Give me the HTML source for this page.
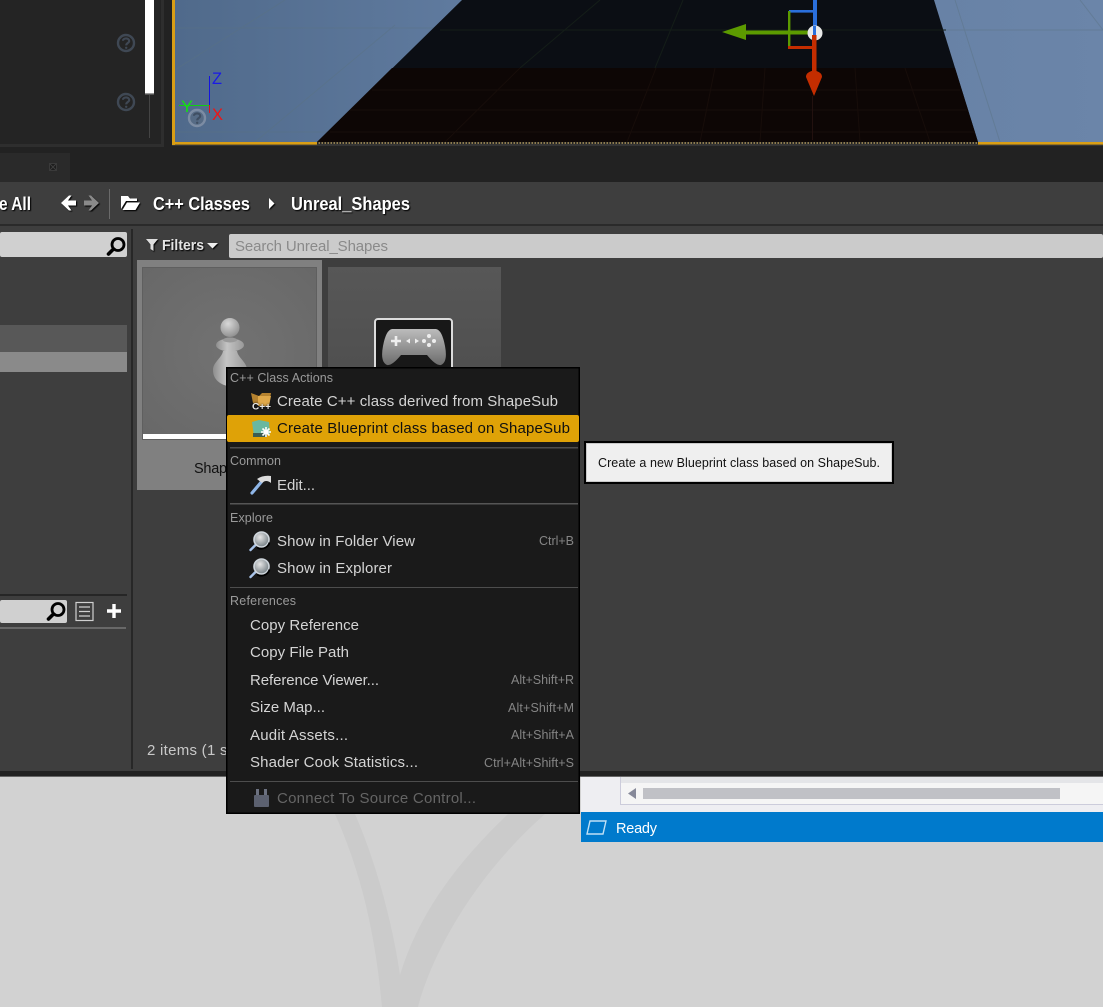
<!DOCTYPE html>
<html>
<head>
<meta charset="utf-8">
<style>
html,body{margin:0;padding:0;background:#d2d2d2;width:1103px;height:1007px;overflow:hidden}
svg{display:block}
text{font-family:"Liberation Sans",sans-serif;white-space:pre}
.m{font-size:15px;fill:#d4d4d4}
.h{font-size:12.5px;fill:#9a9a9a}
.k{font-size:12.5px;fill:#858585}
.b{font-weight:bold;font-size:18px;fill:#fff}
</style>
</head>
<body>
<svg width="1103" height="1007" viewBox="0 0 1103 1007" xmlns="http://www.w3.org/2000/svg">
<defs>
<linearGradient id="sky" x1="0" y1="0" x2="1" y2="0"><stop offset="0" stop-color="#506a8b"/><stop offset="0.3" stop-color="#5f7a9e"/><stop offset="1" stop-color="#6b85a9"/></linearGradient>
<radialGradient id="th1" cx="0.5" cy="0.5" r="0.7"><stop offset="0" stop-color="#727272"/><stop offset="1" stop-color="#686868"/></radialGradient>
<linearGradient id="th2" x1="0" y1="0" x2="0" y2="1"><stop offset="0" stop-color="#575757"/><stop offset="1" stop-color="#4b4b4b"/></linearGradient>
<radialGradient id="ball" cx="0.4" cy="0.3" r="0.8"><stop offset="0" stop-color="#d8d8d8"/><stop offset="1" stop-color="#888"/></radialGradient>
<linearGradient id="body" x1="0" y1="0" x2="1" y2="0"><stop offset="0" stop-color="#8e8e8e"/><stop offset="0.4" stop-color="#c4c4c4"/><stop offset="1" stop-color="#999"/></linearGradient>
<linearGradient id="pad" x1="0" y1="0" x2="0" y2="1"><stop offset="0" stop-color="#bcbcbc"/><stop offset="1" stop-color="#6c6c6c"/></linearGradient>
<radialGradient id="lens" cx="0.4" cy="0.35" r="0.7"><stop offset="0" stop-color="#e6e6e6"/><stop offset="1" stop-color="#6f7a80"/></radialGradient>
<clipPath id="vp"><rect x="175" y="0" width="928" height="142"/></clipPath>
<g id="help"><circle r="8" fill="none" stroke="#3f4854" stroke-width="2.4"/><path d="M-3,-2.2 C-3,-5.4 3.2,-5.4 3.2,-2 C3.2,0 0.2,0 0.2,2.4" fill="none" stroke="#3f4854" stroke-width="2.1"/><circle cx="0.2" cy="4.8" r="1.2" fill="#3f4854"/></g>
<g id="glass"><path d="M-8.5,8 L-4.5,4" stroke="#000" stroke-width="3.6" stroke-linecap="round"/><circle cx="1" cy="-1.5" r="6" fill="none" stroke="#000" stroke-width="2.8"/></g>
<g id="show"><path d="M-9.5,9 L-3,2.5" stroke="#a9c4ea" stroke-width="2.4" stroke-linecap="round"/><circle cx="1.5" cy="-1.5" r="7.5" fill="url(#lens)" stroke="#cfd6dc" stroke-width="1.6"/><path d="M-3,6.5 A8.5,8.5 0 0 0 9.5,1.5" fill="none" stroke="#000" stroke-width="1.8"/></g>
</defs>

<!-- base colours -->
<rect width="1103" height="1007" fill="#d2d2d2"/>
<rect width="1103" height="771" fill="#3e3e3e"/>
<rect width="1103" height="182" fill="#222"/>

<!-- wallpaper logo -->
<path d="M335,814 C360,870 375,930 382,1007 L418,1007 C430,960 470,880 545,814 L508,814 C460,860 420,910 400,975 C392,920 375,860 355,814 Z" fill="#cbcbcb"/>

<!-- top left panel -->
<rect x="0" y="0" width="164" height="147" fill="#2e2e2e"/>
<rect x="0" y="0" width="161" height="144" fill="#242424"/>
<rect x="145" y="0" width="9" height="94" fill="#fff"/>
<rect x="145" y="93" width="9" height="1.4" fill="#999"/>
<rect x="149" y="95" width="1" height="43" fill="#444"/>
<use href="#help" x="126" y="43"/>
<use href="#help" x="126" y="102"/>

<!-- viewport -->
<rect x="172" y="0" width="931" height="146" fill="#353535"/>
<g clip-path="url(#vp)">
<rect x="175" y="0" width="928" height="142" fill="url(#sky)"/>
<g stroke="#5a7282" stroke-width="1" opacity="0.45" fill="none">
<path d="M175,28 H470"/><path d="M175,132 H330"/><path d="M255,142 L395,25"/><path d="M175,70 L285,0"/>
<path d="M945,30 H1103"/><path d="M955,0 L1000,142"/><path d="M1080,0 L1103,30"/>
</g>
<polygon points="462,0 934,0 978,142 317,142" fill="#0b0e14"/>
<polygon points="392,68 955,68 978,142 317,142" fill="#0d0605"/>
<g stroke="#141d18" stroke-width="1" fill="none">
<path d="M440,30 H946"/><path d="M520,68 L600,0"/><path d="M655,68 L683,0"/>
</g>
<g stroke="#170d0a" stroke-width="1" fill="none">
<path d="M372,90 H960"/><path d="M350,110 H967"/><path d="M330,132 H975"/>
<path d="M445,142 L520,68"/><path d="M627,142 L656,68"/>
<path d="M700,142 L715,68"/><path d="M760,142 L765,68"/><path d="M860,142 L855,68"/><path d="M930,142 L905,68"/>
</g>
<!-- gizmo -->
<rect x="813" y="0" width="4" height="33" fill="#2a6fdc"/>
<rect x="789" y="10" width="25" height="2.6" fill="#2a6fdc"/>
<rect x="788" y="11" width="2.4" height="36" fill="#5c9a00"/>
<polygon points="722,32 746,24 746,40" fill="#5c9a00"/>
<rect x="745" y="30.5" width="66" height="4" fill="#5c9a00"/>
<rect x="788" y="46" width="26" height="3" fill="#c42d00"/>
<circle cx="815" cy="33" r="7.5" fill="#e8e8e8"/>
<rect x="812" y="35" width="4.5" height="42" fill="#c42d00"/>
<rect x="813" y="26" width="3" height="9" fill="#2a6fdc"/>
<path d="M806,77 C806,73 809,72 814,70 C819,72 822,73 822,77 L814,96 Z" fill="#c42d00"/>
<rect x="812" y="96" width="1" height="44" fill="#22110f"/>
<!-- axes -->
<rect x="209" y="76" width="1" height="29" fill="#1414e0"/>
<rect x="179" y="105" width="30" height="1" fill="#10d010"/>
<rect x="209" y="105" width="1" height="8" fill="#e01414"/>
<text x="212" y="84" font-size="17" fill="#1a1ae6" textLength="10" lengthAdjust="spacingAndGlyphs">Z</text>
<text x="181" y="112" font-size="17" fill="#14e014" textLength="12" lengthAdjust="spacingAndGlyphs">Y</text>
<text x="212" y="120" font-size="17" fill="#f01414" textLength="11" lengthAdjust="spacingAndGlyphs">X</text>
<g transform="translate(197,118)"><circle r="8" fill="#566b85" stroke="#7c8ca3" stroke-width="2.4"/><path d="M-3,-2.2 C-3,-5.4 3.2,-5.4 3.2,-2 C3.2,0 0.2,0 0.2,2.4" fill="none" stroke="#3f4e62" stroke-width="2.1"/><circle cx="0.2" cy="4.8" r="1.2" fill="#3f4e62"/></g>
</g>
<rect x="172" y="0" width="3" height="145" fill="#d99e15"/>
<rect x="172" y="142" width="145" height="2.6" fill="#d99e15"/>
<rect x="978" y="142" width="125" height="2.6" fill="#d99e15"/>
<rect x="317" y="142" width="661" height="2" fill="#8c7a4e"/>
<path d="M317,143 H978" stroke="#222" stroke-width="2" stroke-dasharray="1.5 1.5"/>

<!-- tab -->
<rect x="0" y="153" width="70" height="29" fill="#2a2a2a"/>
<rect x="49.5" y="163.5" width="7" height="7" fill="#1d1d1d" stroke="#3a3a3a"/>
<path d="M50,164 L56,170 M56,164 L50,170" stroke="#3f3f3f" stroke-width="1"/>

<!-- toolbar -->
<rect x="0" y="182" width="1103" height="42" fill="#3e3e3e"/>
<rect x="0" y="224" width="1103" height="2" fill="#2a2a2a"/>
<g style="filter:drop-shadow(1px 1px 0.6px #000)">
<text class="b" x="-1" y="210" textLength="32" lengthAdjust="spacingAndGlyphs">e All</text>
<path d="M61,203 L69,195.5 L71.5,195.5 L68,200.5 H76 V205.5 H68 L71.5,210.5 L69,210.5 Z" fill="#fff"/>
<path d="M99,203 L91,195.5 L88.5,195.5 L92,200.5 H84 V205.5 H92 L88.5,210.5 L91,210.5 Z" fill="#8a8a8a"/>
<path d="M121,209 V196 H128 L130,198.5 H137 V201 H126 L121,209 Z M122.5,210 L127,202.5 H140 L135.5,210 Z" fill="#fff"/>
<text class="b" x="153" y="210" textLength="97" lengthAdjust="spacingAndGlyphs">C++ Classes</text>
<path d="M269,198 L274.5,203.5 L269,209 Z" fill="#fff"/>
<text class="b" x="291" y="210" textLength="119" lengthAdjust="spacingAndGlyphs">Unreal_Shapes</text>
</g>
<rect x="109" y="189" width="1" height="30" fill="#6a6a6a"/>

<!-- left search -->
<rect x="0" y="232" width="127" height="25" rx="2" fill="#d0d0d0"/>
<use href="#glass" x="117" y="246"/>
<rect x="0" y="325" width="127" height="27" fill="#585858"/>
<rect x="0" y="352" width="127" height="20" fill="#8a8a8a"/>
<rect x="0" y="594" width="127" height="2" fill="#262626"/>
<rect x="0" y="600" width="67" height="23" rx="2" fill="#d0d0d0"/>
<use href="#glass" x="57" y="611"/>
<rect x="76" y="602.5" width="17" height="18" fill="none" stroke="#d0d0d0" stroke-width="1.2"/>
<path d="M79,607 H90 M79,611.5 H90 M79,616 H90" stroke="#d0d0d0" stroke-width="1.2"/>
<path d="M114,604 V618 M107,611 H121" stroke="#fff" stroke-width="3.4"/>
<rect x="0" y="627" width="126" height="2" fill="#686868"/>
<rect x="131" y="229" width="2" height="540" fill="#272727"/>

<!-- filters / search -->
<g style="filter:drop-shadow(1px 1px 0.4px #000)">
<path d="M146,239 H158 L153.5,244.5 V251 L150.5,249 V244.5 Z" fill="#ddd"/>
<text x="162" y="250" font-size="14.5" font-weight="bold" fill="#e4e4e4" textLength="42" lengthAdjust="spacingAndGlyphs">Filters</text>
<path d="M207,243 H218 L212.5,248.5 Z" fill="#eee"/>
</g>
<rect x="229" y="234" width="874" height="24" rx="2" fill="#cbcbcb"/>
<text x="235" y="251" font-size="15" fill="#8a8a8a" textLength="153">Search Unreal_Shapes</text>

<!-- assets -->
<rect x="137" y="260" width="185" height="230" fill="#808080"/>
<rect x="142" y="267" width="175" height="173" fill="#5f5f5f"/>
<rect x="143" y="268" width="173" height="167" fill="url(#th1)"/>
<rect x="143" y="434" width="175" height="5" fill="#fff"/>
<path d="M223,351 C222,358 213,362 213,370 C213,378 218,385 232,387 C242,385 247,378 247,370 C247,362 238,358 237,351 Z" fill="url(#body)"/>
<ellipse cx="230" cy="345" rx="14" ry="6.5" fill="url(#body)"/>
<ellipse cx="230" cy="340" rx="7" ry="2.5" fill="#9a9a9a"/>
<circle cx="230" cy="327.5" r="9.5" fill="url(#ball)"/>
<text x="194" y="473" font-size="14.5" fill="#111" textLength="66">ShapeSub</text>

<rect x="328" y="267" width="173" height="170" fill="url(#th2)"/>
<rect x="375" y="319" width="77" height="60" rx="3" fill="#181818" stroke="#dcdcdc" stroke-width="2"/>
<path d="M392,329 H436 Q442,330 445,346 Q448,362 441,365 Q436,366 427,355 H401 Q392,366 387,365 Q380,362 383,346 Q386,330 392,329 Z" fill="url(#pad)"/>
<path d="M396,336 V346 M391,341 H401" stroke="#eee" stroke-width="2.6"/>
<circle cx="429" cy="336" r="2" fill="#eee"/><circle cx="434" cy="341" r="2" fill="#eee"/><circle cx="429" cy="345" r="2" fill="#eee"/><circle cx="424" cy="341" r="2" fill="#eee"/>
<path d="M406,341 L410,338.5 V343.5 Z M419,341 L415,338.5 V343.5 Z" fill="#eee"/>

<text x="147" y="755" font-size="15" fill="#c8c8c8" textLength="136">2 items (1 selected)</text>

<!-- bottom strip -->
<rect x="0" y="771" width="1103" height="5" fill="#222"/>
<rect x="0" y="776" width="1103" height="1" fill="#666"/>

<!-- VS window -->
<rect x="581" y="777" width="522" height="35" fill="#eeeef2"/>
<rect x="620" y="777" width="483" height="28" fill="#f5f5f5"/>
<rect x="620" y="777" width="483" height="6" fill="#e4e5e8"/>
<rect x="620" y="777" width="1" height="28" fill="#ccccdb"/>
<rect x="620" y="804" width="483" height="1" fill="#ccccdb"/>
<polygon points="628,793.5 636,788 636,799" fill="#868999"/>
<rect x="643" y="788" width="417" height="11" fill="#c0c1c6"/>
<rect x="581" y="812" width="522" height="30" fill="#007acc"/>
<path d="M590,821 H606 L603,834 H587 Z" fill="none" stroke="#bfe0f5" stroke-width="1.4"/>
<text x="616" y="833" font-size="14.5" fill="#fff" textLength="41">Ready</text>

<!-- context menu -->
<rect x="226" y="367" width="354" height="447" fill="#000"/>
<rect x="227.5" y="368.5" width="351" height="444" fill="#1a1a1a"/>
<rect x="227" y="415" width="352" height="27" rx="2" fill="#dfa207"/>
<rect x="230" y="447" width="348" height="1.5" fill="#4d4d4d"/>
<rect x="230" y="503" width="348" height="1.5" fill="#555"/>
<rect x="230" y="587" width="348" height="1" fill="#4d4d4d"/>
<rect x="230" y="781" width="348" height="1" fill="#4d4d4d"/>

<text class="h" x="230" y="382" textLength="103">C++ Class Actions</text>
<path d="M251,393 L259,396 L262,393 H271 L269,405 H258 L253,403 Z" fill="#b5822f"/>
<path d="M258,396 H271 L269,406 H258 Z" fill="#e0a94a"/>
<text x="252" y="409.5" font-size="9.5" font-weight="bold" fill="#e8e8e8" textLength="19" lengthAdjust="spacingAndGlyphs" style="filter:drop-shadow(0 0 1px #000)">C++</text>
<text class="m" x="277" y="406" textLength="281">Create C++ class derived from ShapeSub</text>

<path d="M252,422 L259,420 L269,422 L270,434 L254,436 Z" fill="#69b8a0"/>
<rect x="253" y="433" width="14" height="4" fill="#3c5d52"/>
<path d="M266,427 V437 M261,432 H271 M262.5,428.5 L269.5,435.5 M269.5,428.5 L262.5,435.5" stroke="#fff" stroke-width="1.6"/>
<text class="m" style="fill:#101010" x="277" y="433" textLength="293">Create Blueprint class based on ShapeSub</text>

<text class="h" x="230" y="465" textLength="51">Common</text>
<path d="M252,493 L263,480" stroke="#8fb6e8" stroke-width="3.2" stroke-linecap="round"/>
<path d="M257,479 Q263,475 271,476 L271,483 Q266,479 262,483 Z" fill="#dcdcdc"/>
<text class="m" x="277" y="490" textLength="38">Edit...</text>

<text class="h" x="230" y="522" textLength="43">Explore</text>
<use href="#show" x="260" y="541"/>
<text class="m" x="277" y="546" textLength="138">Show in Folder View</text>
<text class="k" x="539" y="545" textLength="35">Ctrl+B</text>
<use href="#show" x="260" y="568"/>
<text class="m" x="277" y="573" textLength="115">Show in Explorer</text>

<text class="h" x="230" y="605" textLength="66">References</text>
<text class="m" x="250" y="630" textLength="109">Copy Reference</text>
<text class="m" x="250" y="657" textLength="99">Copy File Path</text>
<text class="m" x="250" y="685" textLength="129">Reference Viewer...</text>
<text class="k" x="511" y="684" textLength="63">Alt+Shift+R</text>
<text class="m" x="250" y="712" textLength="75">Size Map...</text>
<text class="k" x="508" y="712" textLength="66">Alt+Shift+M</text>
<text class="m" x="250" y="740" textLength="98">Audit Assets...</text>
<text class="k" x="511" y="739" textLength="63">Alt+Shift+A</text>
<text class="m" x="250" y="767" textLength="168">Shader Cook Statistics...</text>
<text class="k" x="484" y="767" textLength="90">Ctrl+Alt+Shift+S</text>

<rect x="254" y="795" width="15" height="12" rx="1" fill="#5c6170"/>
<rect x="256" y="789" width="3" height="6" fill="#6c7180"/><rect x="264" y="789" width="3" height="6" fill="#6c7180"/>
<text class="m" style="fill:#656565" x="277" y="803" textLength="199">Connect To Source Control...</text>

<!-- tooltip -->
<rect x="584" y="441" width="310" height="43" fill="#000"/>
<rect x="586.5" y="443.5" width="305" height="38" fill="#efefef" stroke="#c9c9c9"/>
<text x="598" y="467" font-size="12.5" fill="#111" textLength="282">Create a new Blueprint class based on ShapeSub.</text>
</svg>
</body>
</html>
